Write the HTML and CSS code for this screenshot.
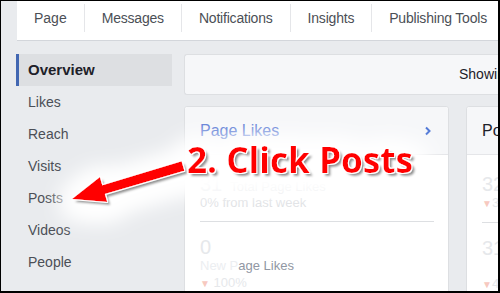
FILE: index.html
```html
<!DOCTYPE html>
<html>
<head>
<meta charset="utf-8">
<link rel="stylesheet" href="styles.css">
</head>
<body>
<div class="page">
  <nav class="tabs">
    <a class="tab">Page</a>
    <a class="tab">Messages</a>
    <a class="tab">Notifications</a>
    <a class="tab">Insights</a>
    <a class="tab">Publishing Tools</a>
  </nav>
  <div class="content">
    <aside class="side">
      <div class="side-item active">Overview</div>
      <div class="side-item">Likes</div>
      <div class="side-item">Reach</div>
      <div class="side-item">Visits</div>
      <div class="side-item">Posts</div>
      <div class="side-item">Videos</div>
      <div class="side-item">People</div>
    </aside>
    <main class="main">
      <div class="notice"><span>Showing data from last 7 days</span></div>
      <div class="cards">
        <section class="card">
          <header class="card-head">
            <span class="card-title link">Page Likes</span>
            <svg class="chev" width="8" height="10" viewBox="0 0 8 10"><path d="M2 1.5 L5.5 5 L2 8.5" fill="none" stroke="#4f77d6" stroke-width="2"/></svg>
          </header>
          <div class="card-body">
            <div class="stat-line faded"><span class="num">31</span><span class="label">Total Page Likes</span></div>
            <div class="sub faded">0% from last week</div>
            <div class="divider"></div>
            <div class="num num-block">0</div>
            <div class="label label-block"><span class="ghost">New P</span>age Likes</div>
            <div class="sub"><span class="down">▼</span> <span class="pct">100%</span></div>
          </div>
        </section>
        <section class="card">
          <header class="card-head">
            <span class="card-title">Post Reach</span>
          </header>
          <div class="card-body">
            <div class="stat-line"><span class="num">32</span><span class="label">Total Reach</span></div>
            <div class="sub"><span class="down">▼</span><span class="pct">3%</span></div>
            <div class="divider"></div>
            <div class="num num-block">31</div>
            <div class="label label-block">&nbsp;</div>
            <div class="sub"><span class="down">▼</span><span class="pct">4%</span></div>
          </div>
        </section>
      </div>
    </main>
  </div>
  <svg class="annot" width="500" height="293" viewBox="0 0 500 293">
    <defs>
      <filter id="glow" x="-40%" y="-90%" width="180%" height="280%">
        <feMorphology in="SourceAlpha" operator="dilate" radius="8" result="d"/>
        <feGaussianBlur in="d" stdDeviation="12" result="b0"/>
        <feOffset in="b0" dx="2" dy="5" result="b"/>
        <feFlood flood-color="#ffffff"/>
        <feComposite in2="b" operator="in" result="w"/>
        <feGaussianBlur in="SourceAlpha" stdDeviation="1.2" result="s"/>
        <feOffset in="s" dx="3" dy="3" result="so"/>
        <feFlood flood-color="#3a3a3a" flood-opacity="0.75"/>
        <feComposite in2="so" operator="in" result="sh"/>
        <feMorphology in="SourceAlpha" operator="dilate" radius="1" result="d2"/>
        <feFlood flood-color="#ffffff"/>
        <feComposite in2="d2" operator="in" result="edge"/>
        <feMerge>
          <feMergeNode in="w"/>
          <feMergeNode in="w"/>
          <feMergeNode in="w"/>
          <feMergeNode in="sh"/>
          <feMergeNode in="edge"/>
          <feMergeNode in="SourceGraphic"/>
        </feMerge>
      </filter>
    </defs>
    <g filter="url(#glow)">
      <polygon fill="#ff0000" points="72,199 99.9,177.1 102.3,185.3 181.6,161.2 184.4,170.8 104.9,193.9 107.3,202.1"/>
      <text class="annot-text" x="187" y="173" textLength="226" lengthAdjust="spacingAndGlyphs">2. Click Posts</text>
    </g>
  </svg>
  <div class="frame"></div>
</div>
</body>
</html>
```

FILE: styles.css
```css
* { box-sizing: border-box; }
html, body { margin: 0; padding: 0; }
body {
  width: 500px;
  height: 293px;
  overflow: hidden;
  background: #e9ebee;
  font-family: "Liberation Sans", Arial, sans-serif;
  color: #4b4f56;
}
.page {
  position: relative;
  width: 500px;
  height: 293px;
  overflow: hidden;
  padding: 1px 0 0 16px;
}
.tabs {
  display: flex;
  align-items: center;
  height: 40px;
  margin-left: 1px;
  background: #fff;
  border-bottom: 1px solid #d3d6db;
  white-space: nowrap;
  padding-bottom: 5px;
}
.tab {
  font-size: 14px;
  line-height: 28px;
  padding: 0 17px;
  border-right: 1px solid #e5e6e9;
  color: #4b4f56;
  letter-spacing: -0.2px;
}
.tab:first-child { letter-spacing: 0; }
.tab:last-child { border-right: 0; }
.content {
  display: flex;
  gap: 12px;
  margin-top: 13px;
}
.side {
  width: 156px;
  flex: none;
}
.side-item {
  height: 32px;
  line-height: 32px;
  font-size: 14px;
  padding-left: 12px;
  color: #4b4f56;
}
.side-item.active {
  background: #dddfe2;
  border-left: 3px solid #4267b2;
  padding-left: 9px;
  font-weight: bold;
  font-size: 15px;
  color: #1d2129;
}
.main {
  flex: 1;
  min-width: 0;
}
.notice {
  height: 41px;
  background: #f6f7f9;
  border: 1px solid #dddfe2;
  border-right: 0;
  border-radius: 3px 0 0 3px;
  padding-left: 274px;
  font-size: 14px;
  line-height: 39px;
  color: #1d2129;
  white-space: nowrap;
  overflow: hidden;
}
.cards {
  display: flex;
  gap: 17px;
  margin-top: 11px;
}
.card {
  width: 265px;
  flex: none;
  height: 220px;
  background: #fff;
  border: 1px solid #dddfe2;
  border-radius: 3px;
}
.card-head {
  display: flex;
  align-items: center;
  justify-content: space-between;
  height: 48px;
  padding: 0 16px 0 15px;
  background: #f6f7f9;
  border-bottom: 1px solid #e5e6e9;
  border-radius: 3px 3px 0 0;
  white-space: nowrap;
}
.card-title {
  font-size: 16px;
  color: #1d2129;
}
.card-title.link { color: #5b7bd5; }
.chev { display: block; }
.card-body {
  padding: 20px 14px 0 15px;
  white-space: nowrap;
}
.stat-line {
  display: flex;
  align-items: baseline;
  line-height: 18px;
}
.num {
  font-size: 20px;
  color: #e6e8eb;
  margin-right: 8px;
}
.label {
  font-size: 13px;
  color: #9197a3;
}
.sub {
  font-size: 13px;
  line-height: 14px;
  color: #9197a3;
}
.faded .label, .sub.faded { color: #dcdee2; }
.faded .num { color: #e2e4e8; }
.ghost { color: #eceef1; }
.pct { color: #e6e8eb; }
.down {
  color: #f7c9c0;
  font-size: 10px;
}
.divider {
  height: 1px;
  background: #dddfe2;
  margin: 11px 0 16px;
}
.num-block { line-height: 18px; }
.label-block { line-height: 20px; }
.annot {
  position: absolute;
  left: 0;
  top: 0;
}
.annot-text {
  font-family: "Open Sans", sans-serif;
  font-weight: 700;
  font-size: 35px;
  fill: #ff0000;
}
.frame {
  position: absolute;
  inset: 0;
  border-style: solid;
  border-color: #000;
  border-width: 1px 2px 2px 1px;
  pointer-events: none;
}
```
